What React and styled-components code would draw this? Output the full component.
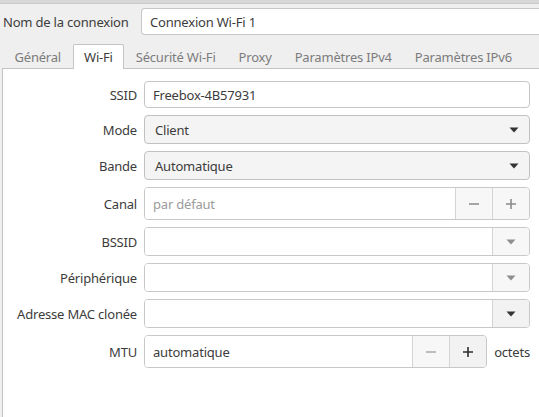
import React from 'react';
import styled, { createGlobalStyle } from 'styled-components';

const GlobalStyle = createGlobalStyle`
  html, body {
    margin: 0;
    padding: 0;
    background: #efefef;
    overflow: hidden;
  }

  body {
    font-family: "Noto Sans", "DejaVu Sans", sans-serif;
    font-size: 13px;
    letter-spacing: -0.2px;
    color: #3c3c3c;
  }
`;

const Window = styled.div`
  display: flex;
  flex-direction: column;
  width: 560px;
  height: 417px;
  background: #efefef;
`;

const TopStrip = styled.div`
  height: 3px;
  background: #d7d7d7;
  border-bottom: 1px solid #c9c9c9;
`;

const NameRow = styled.div`
  display: flex;
  align-items: center;
  padding: 4px 0 0 3px;
`;

const NameLabel = styled.div`
  flex: 0 0 138px;
`;

const Entry = styled.div`
  display: flex;
  align-items: center;
  box-sizing: border-box;
  height: ${props => props.h || 28}px;
  flex: 1;
  min-width: 0;
  padding: 0 8px;
  background: #fff;
  border: 1px solid #c6c6c6;
  border-radius: 4px;
  color: ${props => (props.placeholder ? '#9b9b9b' : '#3c3c3c')};
  white-space: nowrap;
`;

const NameEntry = styled(Entry)`
  border-right: none;
  border-radius: 4px 0 0 4px;
`;

const TabBar = styled.div`
  display: flex;
  margin: 9px 0 0 3px;
  height: 24px;
`;

const Tab = styled.div`
  position: relative;
  z-index: 1;
  display: flex;
  align-items: center;
  box-sizing: border-box;
  height: 25px;
  padding: 0 10.5px;
  margin-bottom: -1px;
  color: ${props => (props.active ? '#3c3c3c' : '#7c7c7c')};
  background: ${props => (props.active ? '#fff' : 'transparent')};
  border: 1px solid ${props => (props.active ? '#c4c4c4' : 'transparent')};
  border-bottom: none;
  border-radius: 2px 2px 0 0;
  white-space: nowrap;
`;

const Panel = styled.div`
  flex: 1;
  margin-left: 2px;
  padding-top: 12px;
  background: #fff;
  border-top: 1px solid #c4c4c4;
  border-left: 1px solid #c4c4c4;
`;

const Form = styled.div`
  display: grid;
  grid-template-columns: 134px 386px;
  column-gap: 7px;
  row-gap: 7px;
  align-items: center;
`;

const Label = styled.div`
  text-align: right;
  white-space: nowrap;
`;

const Combo = styled.div`
  display: flex;
  align-items: center;
  justify-content: space-between;
  box-sizing: border-box;
  height: ${props => props.h || 29}px;
  padding: 0 10px 0 10px;
  background: #f4f4f4;
  border: 1px solid #c1c1c1;
  border-radius: 4px;
`;

const Linked = styled.div`
  display: flex;
  box-sizing: border-box;
  width: ${props => props.w || 386}px;
  height: ${props => props.h || 29}px;
  border: 1px solid #c8c8c8;
  border-radius: 4px;
  overflow: hidden;
`;

const LinkedEntry = styled.div`
  display: flex;
  align-items: center;
  flex: 1;
  padding: 0 8px;
  background: #fff;
  color: ${props => (props.placeholder ? '#9b9b9b' : '#3c3c3c')};
`;

const SideButton = styled.div`
  display: flex;
  align-items: center;
  justify-content: center;
  width: 36px;
  background: ${props => (props.dim ? '#f7f7f7' : '#f2f2f2')};
  border-left: 1px solid #d4d4d4;
`;

const SpinRow = styled.div`
  display: flex;
  align-items: center;
  gap: 7px;
`;

const Arrow = ({ color = '#333' }) => (
  <svg width="10" height="6" viewBox="0 0 10 6">
    <path d="M0.5 0.5 L9.5 0.5 L5 5.5 Z" fill={color} />
  </svg>
);

const Minus = ({ color = '#8a8a8a' }) => (
  <svg width="12" height="12" viewBox="0 0 12 12">
    <path d="M1 6 H11" stroke={color} strokeWidth="1.6" />
  </svg>
);

const Plus = ({ color = '#8a8a8a' }) => (
  <svg width="12" height="12" viewBox="0 0 12 12">
    <path d="M1 6 H11 M6 1 V11" stroke={color} strokeWidth="1.6" />
  </svg>
);

const TABS = ['Général', 'Wi-Fi', 'Sécurité Wi-Fi', 'Proxy', 'Paramètres IPv4', 'Paramètres IPv6'];

export default function App() {
  return (
    <Window>
      <GlobalStyle />
      <TopStrip />
      <NameRow>
        <NameLabel>Nom de la connexion</NameLabel>
        <NameEntry h={27}>Connexion Wi-Fi 1</NameEntry>
      </NameRow>
      <TabBar>
        {TABS.map(t => (
          <Tab key={t} active={t === 'Wi-Fi'}>{t}</Tab>
        ))}
      </TabBar>
      <Panel>
        <Form>
          <Label>SSID</Label>
          <Entry h={27}>Freebox-4B57931</Entry>

          <Label>Mode</Label>
          <Combo>
            <span>Client</span>
            <Arrow />
          </Combo>

          <Label>Bande</Label>
          <Combo>
            <span>Automatique</span>
            <Arrow />
          </Combo>

          <Label>Canal</Label>
          <Linked h={33}>
            <LinkedEntry placeholder>par défaut</LinkedEntry>
            <SideButton dim><Minus /></SideButton>
            <SideButton dim><Plus /></SideButton>
          </Linked>

          <Label>BSSID</Label>
          <Linked>
            <LinkedEntry />
            <SideButton dim><Arrow color="#8e8e8e" /></SideButton>
          </Linked>

          <Label>Périphérique</Label>
          <Linked>
            <LinkedEntry />
            <SideButton dim><Arrow color="#8e8e8e" /></SideButton>
          </Linked>

          <Label>Adresse MAC clonée</Label>
          <Linked>
            <LinkedEntry />
            <SideButton><Arrow /></SideButton>
          </Linked>

          <Label>MTU</Label>
          <SpinRow>
            <Linked w={344} h={33}>
              <LinkedEntry>automatique</LinkedEntry>
              <SideButton dim><Minus color="#a8a8a8" /></SideButton>
              <SideButton><Plus color="#2e2e2e" /></SideButton>
            </Linked>
            <span>octets</span>
          </SpinRow>
        </Form>
      </Panel>
    </Window>
  );
}
